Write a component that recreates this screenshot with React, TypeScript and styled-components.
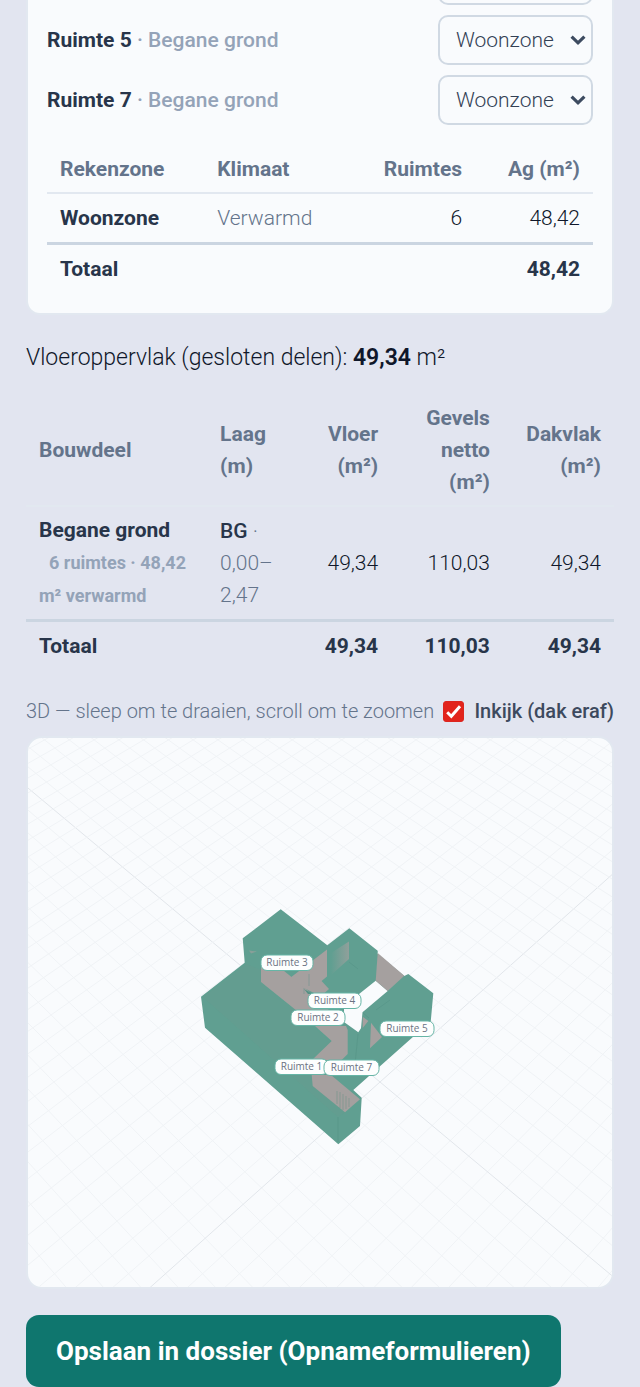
import React, { useState } from "react";
import styled, { createGlobalStyle } from "styled-components";

const GlobalStyle = createGlobalStyle`
  *, *::before, *::after { box-sizing: border-box; }
  body {
    margin: 0;
    background: #e2e5f0;
    color: #0f172a;
    font-family: Roboto, "Liberation Sans", sans-serif;
    font-weight: 300;
    font-size: 21px;
    line-height: 32px;
  }
`;

const Page = styled.main`
  padding: 0 26px;
`;

const Card = styled.section`
  padding: 0 19px 20px;
  background: #f9fbfd;
  border: 2px solid #e2e8f0;
  border-top: 0;
  border-radius: 0 0 14px 14px;
`;

const RoomList = styled.div`
  display: flex;
  flex-direction: column;
  gap: 10px;
  margin-bottom: 21px;
`;

const RoomRow = styled.div`
  display: flex;
  align-items: center;
  justify-content: space-between;
`;

const ScrolledRow = styled.div`
  display: flex;
  align-items: flex-end;
  justify-content: flex-end;
  height: 5px;
  overflow: hidden;
`;

const RoomLabel = styled.label`
  font-weight: 500;
  color: #94a3b8;
`;

const RoomName = styled.strong`
  font-weight: 700;
  color: #28354a;
`;

const SelectBox = styled.div`
  display: grid;
  width: 155px;
  align-items: center;
  & > * { grid-area: 1 / 1; }
`;

const Select = styled.select`
  appearance: none;
  width: 100%;
  height: 50px;
  padding: 0 16px;
  border: 2px solid #d0d9e3;
  border-radius: 10px;
  background: #f9fbfd;
  color: #334155;
  font: inherit;
`;

const Chevron = styled.svg`
  justify-self: end;
  width: 16px;
  height: 12px;
  margin-right: 7px;
  pointer-events: none;
`;

const Table = styled.table<{ $dense?: boolean }>`
  width: 100%;
  table-layout: fixed;
  border-collapse: separate;
  border-spacing: 0;
  tbody > tr > * {
    padding: ${(p) => (p.$dense ? 7 : 8)}px 13px;
  }
`;

const Col = styled.col<{ $w: number }>`
  width: ${(p) => p.$w}%;
`;

const Head = styled.th<{ $right?: boolean }>`
  padding: 7px 13px;
  border-bottom: 2px solid #e2e8f0;
  text-align: ${(p) => (p.$right ? "right" : "left")};
  font-weight: 700;
  color: #64748b;
`;

const Cell = styled.td<{ $right?: boolean; $muted?: boolean }>`
  padding: 8px 13px;
  text-align: ${(p) => (p.$right ? "right" : "left")};
  color: ${(p) => (p.$muted ? "#64748b" : "#0f172a")};
`;

const RowHead = styled.th`
  padding: 8px 13px;
  text-align: left;
  font-weight: 700;
  color: #28354a;
`;

const Level = styled.span`
  font-weight: 500;
  color: #28354a;
`;

const RoomCount = styled.span`
  margin-left: 10px;
  font-size: 18px;
  color: #94a3b8;
`;

const TotalRow = styled.tr`
  & > * {
    border-top: 3px solid #cbd5e1;
    font-weight: 700;
    color: #28354a;
  }
`;

const FloorArea = styled.p`
  margin: 25px 0 19px;
  font-size: 23px;
  line-height: 36px;
  strong { font-weight: 600; }
`;

const ViewerBar = styled.div`
  display: flex;
  justify-content: space-between;
  align-items: center;
  margin: 26px 0 10px;
  font-size: 20px;
  line-height: 30px;
  color: #64748b;
  white-space: nowrap;
`;

const Toggle = styled.label`
  display: flex;
  align-items: center;
  gap: 10px;
  font-weight: 500;
  color: #3d4a5e;
`;

const TickBox = styled.span`
  display: grid;
  width: 21px;
  height: 21px;
  & > * { grid-area: 1 / 1; width: 100%; height: 100%; }
  svg { pointer-events: none; }
`;

const Tick = styled.input`
  appearance: none;
  margin: 0;
  border: 1px solid #dc2620;
  border-radius: 3px;
  background: #fff;
  &:checked { background: #e2241c; }
`;

const Viewer = styled.section`
  overflow: hidden;
  border: 2px solid #e2e8f0;
  border-radius: 16px;
  background: #f9fbfd;
  aspect-ratio: 588 / 553;
`;

const Scene = styled.svg`
  display: block;
  width: 100%;
  height: 100%;
`;

const SaveButton = styled.button`
  display: block;
  height: 72px;
  margin-top: 26px;
  padding: 0 30px;
  border: 0;
  border-radius: 13px;
  background: #0f766e;
  color: #fff;
  font: inherit;
  font-size: 26px;
  font-weight: 700;
  white-space: nowrap;
`;

function ZoneSelect({ id, label }: { id: string; label?: string }) {
  return (
    <SelectBox>
      <Select id={id} aria-label={label} defaultValue="Woonzone">
        <option>Woonzone</option>
      </Select>
      <Chevron viewBox="0 0 16 12" aria-hidden="true">
        <path d="M1.600 2.600 8 8.800l6.400-6.200" fill="none" stroke="#3d4b60" strokeWidth="3.200" />
      </Chevron>
    </SelectBox>
  );
}

// Ground grid: both line directions run to a vanishing point on the horizon.
const ORIGIN = { x: 380, y: 1082 };
const VANISH_U = { x: -1323, y: -340 };
const VANISH_V = { x: 1971, y: -340 };
const STEP = 0.0099;

function project(u: number, v: number) {
  const w = 1 + STEP * (u + v);
  const x = (ORIGIN.x + STEP * (u * VANISH_U.x + v * VANISH_V.x)) / w;
  const y = (ORIGIN.y + STEP * (u * VANISH_U.y + v * VANISH_V.y)) / w;
  return `${x.toFixed(1)} ${y.toFixed(1)}`;
}

const gridIndexes = Array.from({ length: 81 }, (_, i) => i - 30);

function Grid() {
  return (
    <g fill="none" stroke="#f0f3f6" strokeWidth="1">
      {gridIndexes.map((k) => (
        <path
          key={k}
          stroke={k === 0 ? "#e2e6eb" : undefined}
          d={`M${project(k, -30)}L${project(k, 60)}M${project(-30, k)}L${project(60, k)}`}
        />
      ))}
    </g>
  );
}

const tags = [
  { name: "Ruimte 3", x: 261, y: 955, w: 52 },
  { name: "Ruimte 4", x: 308, y: 993, w: 53 },
  { name: "Ruimte 2", x: 291, y: 1010, w: 54 },
  { name: "Ruimte 5", x: 380, y: 1021, w: 54 },
  { name: "Ruimte 1", x: 275, y: 1059, w: 53 },
  { name: "Ruimte 7", x: 324, y: 1060, w: 55 },
];

function Building() {
  return (
    <g>
      <path
        fill="#609f91"
        d="M280.700 909.300 327.300 945.300 349.300 928.300 377.700 950.700V954L404.300 976 408.300 974 433.300 993.300 430.500 1024 414 1036 353.300 1090 361.700 1097.700 360 1126 338.300 1144.300 205 1027.700 201 996.700 244.700 962.700 242.700 938.300Z"
      />
      <path fill="#669d90" d="M246 964 261 970V983L297 1012 331 1042 313 1057 312 1084 345 1112 338 1117 203 997Z" opacity="0.6" />
      <path fill="#f9fbfd" d="M375.700 980.700 387.700 991 362.500 1012.300 361 1028.300 358.300 1032.300 344 1022V1006Z" />
      <g fill="#a5a09f">
        <path d="M377.700 953 404.300 975.700 387.700 991 375.700 980.700Z" />
        <path d="M261 966H278L305 988 330 1011H297L261 982Z" />
        <path d="M290 978 327 949.600V976.400L321.600 981 329 989 324.500 993H314L304 988Z" />
        <path d="M315 1026H346L347.700 1030V1054L341.700 1060H312L331.700 1041Z" />
        <path d="M311.700 1075H331L360 1099.300 345 1112.300 312.700 1086Z" />
        <path d="M362.700 1016.700 368.300 1021 362.700 1028Z" />
        <path d="M371 1022.700 382 1037 370 1048.300Z" />
        <path d="M249 950.500 257 951.500 251 953.500Z" opacity="0.6" />
      </g>
      <path fill="url(#fade)" d="M331 953 349 941.500V959L331 975Z" />
      <g fill="none" stroke="#4f8d80" strokeWidth="0.600" opacity="0.6">
        <path d="M304 988V994M309 974V986M349 962 358 969M338 1117V1142M358 1034 355 1064M376 1010 390 1000M363 1013 369 1018" />
        <path d="M337 1091V1104M340 1092V1108M343 1094V1110M346 1096V1109M349 1098V1107" />
      </g>
      <path fill="#539184" d="M304 989 313 994H308Z" />
    </g>
  );
}

function RoomTags() {
  return (
    <g fontFamily="'Open Sans', 'Noto Sans', sans-serif" fontSize="10" fontWeight="400">
      {tags.map((t) => (
        <g key={t.name}>
          <rect x={t.x} y={t.y} width={t.w} height="15.500" rx="6" fill="#fdfefe" stroke="#66b5a6" strokeWidth="1" />
          <text x={t.x + t.w / 2} y={t.y + 11} textAnchor="middle" fill="#6b7383">
            {t.name}
          </text>
        </g>
      ))}
    </g>
  );
}

export default function App() {
  const [cutaway, setCutaway] = useState(true);
  return (
    <>
      <GlobalStyle />
      <Page>
        <Card>
          <RoomList>
            <ScrolledRow>
              <ZoneSelect id="zone-prev" label="Rekenzone" />
            </ScrolledRow>
            {["5", "7"].map((n) => (
              <RoomRow key={n}>
                <RoomLabel htmlFor={`zone-${n}`}>
                  <RoomName>Ruimte {n}</RoomName> · Begane grond
                </RoomLabel>
                <ZoneSelect id={`zone-${n}`} />
              </RoomRow>
            ))}
          </RoomList>
          <Table>
            <colgroup>
              <Col $w={28.8} />
              <Col $w={26} />
              <Col $w={23.6} />
              <Col $w={21.6} />
            </colgroup>
            <thead>
              <tr>
                <Head>Rekenzone</Head>
                <Head>Klimaat</Head>
                <Head $right>Ruimtes</Head>
                <Head $right>Ag (m²)</Head>
              </tr>
            </thead>
            <tbody>
              <tr>
                <RowHead scope="row">Woonzone</RowHead>
                <Cell $muted>Verwarmd</Cell>
                <Cell $right>6</Cell>
                <Cell $right>48,42</Cell>
              </tr>
            </tbody>
            <tfoot>
              <TotalRow>
                <RowHead scope="row">Totaal</RowHead>
                <Cell />
                <Cell />
                <Cell $right>48,42</Cell>
              </TotalRow>
            </tfoot>
          </Table>
        </Card>

        <FloorArea>
          Vloeroppervlak (gesloten delen): <strong>49,34</strong> m²
        </FloorArea>

        <Table $dense>
          <colgroup>
            <Col $w={30.8} />
            <Col $w={15} />
            <Col $w={16.3} />
            <Col $w={19} />
            <Col $w={18.9} />
          </colgroup>
          <thead>
            <tr>
              <Head>Bouwdeel</Head>
              <Head>Laag (m)</Head>
              <Head $right>Vloer (m²)</Head>
              <Head $right>Gevels netto (m²)</Head>
              <Head $right>Dakvlak (m²)</Head>
            </tr>
          </thead>
          <tbody>
            <tr>
              <RowHead scope="row">
                Begane grond <RoomCount>6 ruimtes · 48,42 m² verwarmd</RoomCount>
              </RowHead>
              <Cell $muted>
                <Level>BG</Level> · 0,00–2,47
              </Cell>
              <Cell $right>49,34</Cell>
              <Cell $right>110,03</Cell>
              <Cell $right>49,34</Cell>
            </tr>
          </tbody>
          <tfoot>
            <TotalRow>
              <RowHead scope="row">Totaal</RowHead>
              <Cell />
              <Cell $right>49,34</Cell>
              <Cell $right>110,03</Cell>
              <Cell $right>49,34</Cell>
            </TotalRow>
          </tfoot>
        </Table>

        <ViewerBar>
          <span>3D — sleep om te draaien, scroll om te zoomen</span>
          <Toggle>
            <TickBox>
              <Tick type="checkbox" checked={cutaway} onChange={(e) => setCutaway(e.target.checked)} />
              {cutaway && (
                <svg viewBox="0 0 21 21" aria-hidden="true">
                  <path d="M4.200 11.200 8.300 15.200 17 5.200" fill="none" stroke="#fff" strokeWidth="3" />
                </svg>
              )}
            </TickBox>
            Inkijk (dak eraf)
          </Toggle>
        </ViewerBar>

        <Viewer>
          <Scene viewBox="28 738 584 549" preserveAspectRatio="xMidYMid slice" role="img" aria-label="3D-model">
            <defs>
              <linearGradient id="fade">
                <stop offset="0" stopColor="#a5a09f" stopOpacity="0" />
                <stop offset="1" stopColor="#a5a09f" stopOpacity="0.7" />
              </linearGradient>
            </defs>
            <Grid />
            <Building />
            <RoomTags />
          </Scene>
        </Viewer>

        <SaveButton type="button">Opslaan in dossier (Opnameformulieren)</SaveButton>
      </Page>
    </>
  );
}
